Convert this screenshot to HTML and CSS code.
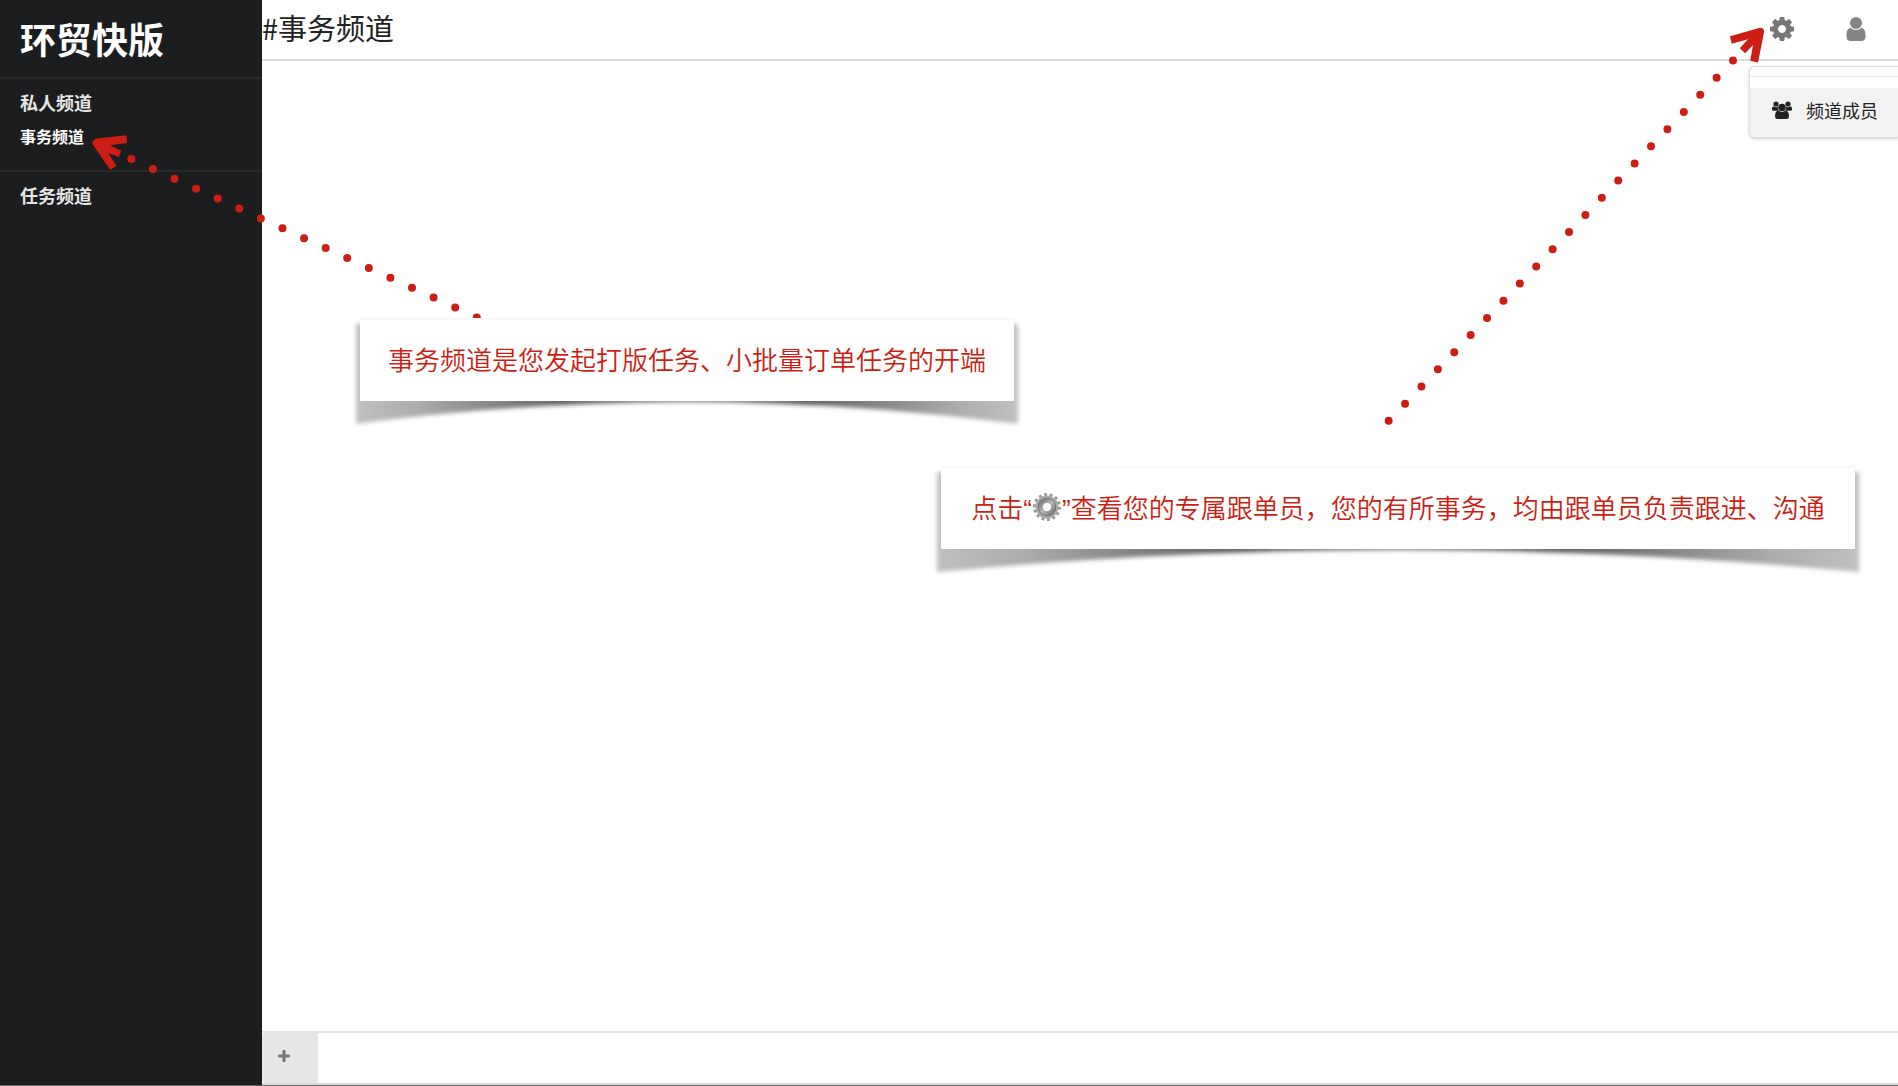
FILE: index.html
```html
<!DOCTYPE html>
<html lang="zh-CN">
<head>
<meta charset="utf-8">
<title>环贸快版</title>
<link rel="stylesheet" href="styles.css">
</head>
<body>
<div class="app">
  <aside class="sidebar">
    <h1 class="brand">环贸快版</h1>
    <nav class="group group-private">
      <h2 class="group-title">私人频道</h2>
      <a class="channel" href="#affairs">事务频道</a>
    </nav>
    <nav class="group">
      <h2 class="group-title">任务频道</h2>
    </nav>
  </aside>

  <main class="main">
    <header class="topbar">
      <h2 class="title">#事务频道</h2>
      <div class="actions">
        <button class="icon-button" type="button" aria-label="频道设置">
          <svg class="icon" viewBox="0 128 1536 1536"><path fill="currentColor" d="M1024 896q0-106-75-181t-181-75-181 75-75 181 75 181 181 75 181-75 75-181zm512-109v222q0 12-8 23t-20 13l-185 28q-19 54-39 91 35 50 107 138 10 12 10 25t-9 23q-27 37-99 108t-94 71q-12 0-26-9l-138-108q-44 23-91 38-16 136-29 186-7 28-36 28h-222q-14 0-24.5-8.5t-11.5-21.5l-28-184q-49-16-90-37l-141 107q-10 9-25 9-14 0-25-11-126-114-165-168-7-10-7-23 0-12 8-23 15-21 51-66.5t54-70.5q-27-50-41-99l-183-27q-13-2-21-12.5t-8-23.5v-222q0-12 8-23t19-13l186-28q14-46 39-92-40-57-107-138-10-12-10-24 0-10 9-23 26-36 98.5-107.5t94.5-71.5q13 0 26 10l138 107q44-23 91-38 16-136 29-186 7-28 36-28h222q14 0 24.5 8.5t11.5 21.5l28 184q49 16 90 37l142-107q9-9 24-9 13 0 25 10 129 119 165 170 7 8 7 22 0 12-8 23-15 21-51 66.5t-54 70.5q26 50 41 98l183 28q13 2 21 12.5t8 23.5z"/></svg>
        </button>
        <button class="icon-button icon-user" type="button" aria-label="个人中心">
          <svg class="icon" viewBox="0 0 24 24"><circle cx="12" cy="6" r="6" fill="currentColor"/><path fill="currentColor" d="M6.600 10.700C3.500 11.200 2.400 14.500 2.400 19C2.400 22 4 24 6.500 24H17.500C20 24 21.600 22 21.600 19C21.600 14.500 20.500 11.200 17.400 10.700C14.500 13.700 9.500 13.700 6.600 10.700Z"/></svg>
        </button>
        <div class="menu">
          <button class="menu-item" type="button">
            <svg class="menu-icon" viewBox="0 0 20 18"><g fill="currentColor"><circle cx="4" cy="3" r="2.600"/><circle cx="16" cy="3" r="2.600"/><path d="M0 9V7.500Q0 5.500 1.500 5.300Q4 7 6 5.600Q5.500 8 6.800 9.700H2Q0 9.700 0 9ZM20 9V7.500Q20 5.500 18.500 5.300Q16 7 14 5.600Q14.500 8 13.200 9.700H18Q20 9.700 20 9Z"/><circle cx="10" cy="6.500" r="3.800"/><path d="M6.400 9.600Q10 12.500 13.600 9.600Q17 10.300 17 15Q17 18 14.500 18H5.500Q3 18 3 15Q3 10.300 6.400 9.600Z"/></g></svg>
            <span>频道成员</span>
          </button>
        </div>
      </div>
    </header>
    <section class="messages"></section>
    <form class="composer">
      <button class="attach" type="button" aria-label="添加附件">
        <svg class="plus" viewBox="0 0 12 12"><path fill="currentColor" d="M4.500 0H7.500V4.500H12V7.500H7.500V12H4.500V7.500H0V4.500H4.500Z"/></svg>
      </button>
      <input class="message-input" type="text" aria-label="消息">
    </form>
  </main>

  <svg class="arrow arrow-channel" viewBox="90 130 400 190" aria-hidden="true">
    <path class="dots" pathLength="16.010" d="M131.300 159L477 317.500"/>
    <path class="head" d="M95 139Q92 141 92.500 144L110.300 170L116.300 165.700L108.300 153L118.700 157L121.300 150.700L110 145.300L127 143L126.700 135.300L97 138.500Z"/>
  </svg>
  <svg class="arrow arrow-settings" viewBox="1380 20 390 410" aria-hidden="true">
    <path class="dots" pathLength="21.010" d="M1733 60.500L1388.500 421"/>
    <path class="head" d="M1730 36.300L1731.700 43.700L1748 39.300L1739.800 48.200L1745.200 53.300L1753 45L1750.200 60.800L1758 62.500L1764.200 31.500Q1764 28 1760 27.700Z"/>
  </svg>

  <div class="note note-channel">
    <svg class="curl" viewBox="0 0 100 100" preserveAspectRatio="none" aria-hidden="true">
      <defs><linearGradient id="curl-shade"><stop offset="0" stop-color="#c0c0c0"/><stop offset=".1" stop-color="#aaa"/><stop offset=".32" stop-color="#606060"/><stop offset=".5" stop-color="#808080"/><stop offset=".68" stop-color="#606060"/><stop offset=".9" stop-color="#aaa"/><stop offset="1" stop-color="#c0c0c0"/></linearGradient></defs>
      <path fill="url(#curl-shade)" d="M0 0H100V100Q50 56 0 100Z"/>
    </svg>
    <p class="note-text">事务频道是您发起打版任务、小批量订单任务的开端</p>
  </div>
  <div class="note note-settings">
    <svg class="curl" viewBox="0 0 100 100" preserveAspectRatio="none" aria-hidden="true"><path fill="url(#curl-shade)" d="M0 0H100V100Q50 56 0 100Z"/></svg>
    <p class="note-text">点击“<svg class="gear" viewBox="0 0 28 30" role="img" aria-label="设置"><defs><linearGradient id="steel" x2="1" y2="1"><stop stop-color="#777"/><stop offset=".5" stop-color="#b8b8b8"/><stop offset="1" stop-color="#777"/></linearGradient></defs><circle cx="14" cy="15" r="12.300" fill="none" stroke="#999" stroke-width="3.400" pathLength="28" stroke-dasharray="1 1"/><circle cx="14" cy="15" r="7.500" fill="none" stroke="#aaa" stroke-width="8"/><circle cx="14" cy="15" r="6.600" fill="none" stroke="url(#steel)" stroke-width="5"/><circle cx="14" cy="15" r="8.800" fill="none" stroke="#777" stroke-width="1"/><circle cx="14" cy="15" r="4" fill="#fff"/></svg>”查看您的专属跟单员，您的有所事务，均由跟单员负责跟进、沟通</p>
  </div>
</div>
</body>
</html>
```
FILE: styles.css
```css
* {
  box-sizing: border-box;
}

body {
  margin: 0;
  background: #fff;
  color: #222;
  font-family: "Noto Sans CJK SC", sans-serif;
}

h1,
h2,
p {
  margin: 0;
}

button,
input {
  margin: 0;
  padding: 0;
  border: 0;
  background: none;
  color: inherit;
  font: inherit;
}

.app {
  position: relative;
  display: flex;
  min-height: 100vh;
  overflow: hidden;
  border-bottom: 1px solid #666;
}

/* Sidebar */
.sidebar {
  flex: 0 0 262px;
  background: #1c1d1e;
  color: #e6e6e6;
}

.brand {
  padding: 12px 20px 13px;
  color: #fff;
  font-size: 36px;
  line-height: 52px;
}

.group {
  padding: 10px 20px;
  border-top: 2px solid #28292a;
}

.group-private {
  padding-bottom: 22px;
}

.group-title {
  font-size: 18px;
  line-height: 26px;
}

.channel {
  display: block;
  margin-top: 9px;
  color: #fff;
  font-size: 16px;
  font-weight: 700;
  line-height: 24px;
  text-decoration: none;
}

/* Main column */
.main {
  display: flex;
  flex: 1;
  flex-direction: column;
  min-width: 0;
}

.topbar {
  display: flex;
  justify-content: space-between;
  height: 61px;
  border-bottom: 2px solid #ddd;
}

.title {
  font-size: 29px;
  font-weight: 400;
  line-height: 55px;
}

.actions {
  position: relative;
  display: flex;
  gap: 50px;
  align-items: center;
  padding: 0 30px 2px 0;
}

.icon-button {
  display: flex;
  color: #777;
}

.icon-user {
  color: #858585;
}

.icon {
  width: 24px;
  height: 24px;
}

.menu {
  position: absolute;
  top: 66px;
  right: 0;
  width: 149px;
  padding-top: 9px;
  border: 1px solid #ddd;
  border-right: 0;
  border-radius: 6px 0 0 6px;
  background: #fff;
  box-shadow: 0 1px 3px #ccc;
}

.menu::before {
  content: "";
  display: block;
  height: 11px;
  border-top: 1px solid #e5e5e5;
}

.menu-item {
  display: flex;
  gap: 14px;
  align-items: center;
  width: 100%;
  height: 49px;
  padding: 0 0 5px 22px;
  border-radius: 0 0 0 6px;
  background: #f2f2f2;
  font-size: 18px;
}

.menu-icon {
  width: 20px;
  height: 18px;
}

.messages {
  flex: 1;
}

.composer {
  display: flex;
  height: 54px;
  border-top: 2px solid #e5e5e5;
  border-bottom: 2px solid #ddd;
}

.attach {
  display: grid;
  place-items: center;
  width: 56px;
  padding-right: 13px;
  padding-bottom: 4px;
  border-radius: 4px 0 0 4px;
  background: #e6e6e6;
  color: #777;
}

.plus {
  width: 12px;
  height: 12px;
}

.message-input {
  flex: 1;
  padding: 0 12px;
  outline: 0;
  font-size: 18px;
}

/* Guide arrows and notes floating over the page */
.arrow {
  position: absolute;
  pointer-events: none;
}

.arrow-channel {
  top: 130px;
  left: 90px;
  width: 400px;
  height: 190px;
}

.arrow-settings {
  top: 20px;
  right: 128px;
  width: 390px;
  height: 410px;
}

.dots {
  fill: none;
  stroke: #cc1e14;
  stroke-dasharray: 0 1;
  stroke-linecap: round;
  stroke-width: 8px;
}

.head {
  fill: #cc1e14;
}

.note {
  position: absolute;
}

.note-channel {
  top: 318px;
  left: 360px;
  width: 654px;
}

.note-settings {
  top: 466px;
  right: 43px;
  width: 914px;
}

.curl {
  position: absolute;
  top: 6px;
  left: -4px;
  width: calc(100% + 8px);
  height: 100px;
  overflow: visible;
  filter: blur(2px);
}

.note-text {
  position: relative;
  height: 83px;
  border-top: 2px solid #f8f8f8;
  background: #fff;
  color: #cc1e14;
  font-family: "Liberation Sans", "Noto Sans CJK SC", sans-serif;
  font-size: 26px;
  font-weight: 350;
  line-height: 82px;
  text-align: center;
  white-space: nowrap;
}

.gear {
  width: 30px;
  height: 30px;
  vertical-align: -4px;
}
```
